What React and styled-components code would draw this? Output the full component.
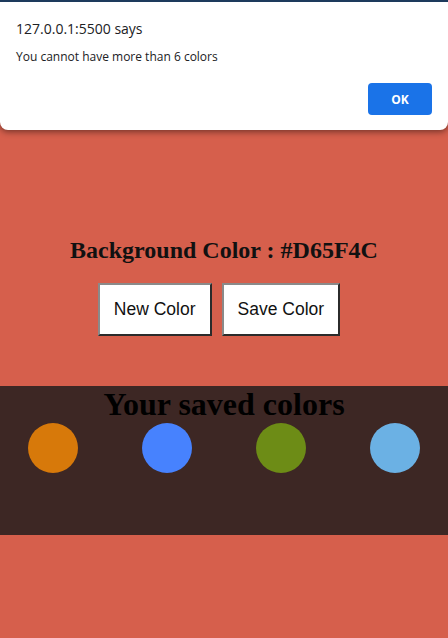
import React from "react";
import styled, { createGlobalStyle } from "styled-components";

const Global = createGlobalStyle`
  html, body { margin: 0; padding: 0; }
  body {
    background: #D65F4C;
    font-family: "Liberation Serif", "Times New Roman", serif;
    width: 448px;
    height: 638px;
    overflow: hidden;
  }
`;

const Page = styled.div`
  position: relative;
  width: 448px;
  height: 638px;
  display: flex;
  flex-direction: column;
  align-items: stretch;
`;

const Controls = styled.div`
  padding-top: 237px;
  display: flex;
  flex-direction: column;
  align-items: center;
  gap: 19px;
`;

const Heading = styled.h2`
  margin: 0;
  font-size: 24px;
  font-weight: bold;
  color: #111;
  line-height: 27px;
`;

const ButtonRow = styled.div`
  display: flex;
  gap: 10px;
  margin-right: 10px;
`;

const Button = styled.button`
  font-family: "Liberation Sans", Arial, sans-serif;
  font-size: 17.5px;
  color: #111;
  background: #fff;
  border: 2px solid;
  border-color: #8a8a8a #2b2b2b #2b2b2b #8a8a8a;
  padding: 0 14px;
  height: 53px;
  white-space: nowrap;
`;

const SavedBand = styled.section`
  margin-top: 50px;
  height: 149px;
  background: #3D2724;
  display: flex;
  flex-direction: column;
  align-items: center;
`;

const SavedTitle = styled.h1`
  margin: 0;
  font-size: 32px;
  font-weight: bold;
  color: #000;
  line-height: 36px;
`;

const Swatches = styled.div`
  align-self: stretch;
  display: flex;
  justify-content: space-between;
  padding: 0 28px;
  margin-top: 1px;
`;

const Swatch = styled.div`
  width: 50px;
  height: 50px;
  border-radius: 50%;
  background: ${(p) => p.$c};
`;

const Dialog = styled.div`
  position: absolute;
  top: 0;
  left: 0;
  right: 0;
  height: 130px;
  background: #fff;
  border-top: 2px solid #1d3a5c;
  border-radius: 0 0 8px 8px;
  box-shadow: 0 2px 6px rgba(0, 0, 0, 0.45);
  font-family: "Open Sans", "Noto Sans", sans-serif;
  color: #202124;
  box-sizing: border-box;
  padding: 17px 16px 0 16px;
  display: flex;
  flex-direction: column;
`;

const DialogTitle = styled.div`
  font-size: 14px;
  line-height: 20px;
`;

const DialogMessage = styled.div`
  font-size: 12px;
  line-height: 16px;
  margin-top: 10px;
`;

const DialogActions = styled.div`
  display: flex;
  justify-content: flex-end;
  margin-top: 18px;
`;

const OkButton = styled.button`
  width: 64px;
  height: 32px;
  border: none;
  border-radius: 4px;
  background: #1A73E8;
  color: #fff;
  font-family: "Open Sans", "Noto Sans", sans-serif;
  font-weight: bold;
  font-size: 12px;
`;

const colors = ["#D7790A", "#4782FE", "#6D8C16", "#6BB1E4"];

export default function App() {
  return (
    <>
      <Global />
      <Page>
        <Controls>
          <Heading>Background Color : #D65F4C</Heading>
          <ButtonRow>
            <Button>New Color</Button>
            <Button>Save Color</Button>
          </ButtonRow>
        </Controls>
        <SavedBand>
          <SavedTitle>Your saved colors</SavedTitle>
          <Swatches>
            {colors.map((c) => (
              <Swatch key={c} $c={c} />
            ))}
          </Swatches>
        </SavedBand>
        <Dialog>
          <DialogTitle>127.0.0.1:5500 says</DialogTitle>
          <DialogMessage>You cannot have more than 6 colors</DialogMessage>
          <DialogActions>
            <OkButton>OK</OkButton>
          </DialogActions>
        </Dialog>
      </Page>
    </>
  );
}
